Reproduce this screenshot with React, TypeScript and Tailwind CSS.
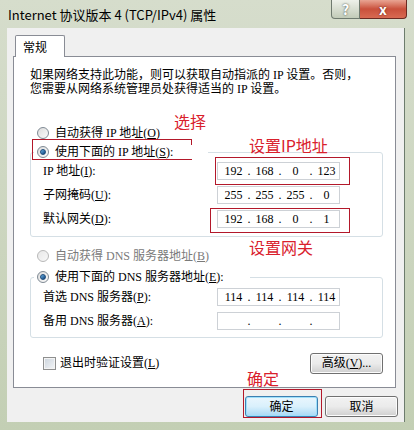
import { Fragment } from "react"

const sans = "font-['Noto_Sans_CJK_SC',sans-serif]"
const body = "font-['Liberation_Serif','Noto_Sans_CJK_SC',serif]"

function Radio({ checked, disabled }: { checked?: boolean; disabled?: boolean }) {
  return (
    <span
      className={
        disabled
          ? "flex items-center justify-center w-[12px] h-[12px] rounded-full border border-[#b8b8b8] bg-gradient-to-br from-[#e8e8e8] to-[#f8f8f8] shrink-0"
          : "flex items-center justify-center w-[12px] h-[12px] rounded-full border border-[#7f8a94] bg-gradient-to-br from-[#dcdcdc] to-[#fbfbfb] shrink-0"
      }
    >
      {checked && (
        <span className="w-[6px] h-[6px] rounded-full bg-gradient-to-br from-[#6fb6e8] to-[#0b3f78] border border-[#1d4b7a]" />
      )}
    </span>
  )
}

function IpBox({ parts }: { parts: string[] }) {
  return (
    <div className="w-[123px] h-[18px] border border-[#cdd1d6] bg-white flex items-center pl-[3px] text-[12px] leading-none text-black">
      {parts.map((p, i) => (
        <Fragment key={i}>
          {i > 0 && <span className="w-[6px] text-center">.</span>}
          <span className="w-[25px] text-center">{p}</span>
        </Fragment>
      ))}
    </div>
  )
}

function Field({ label, parts }: { label: React.ReactNode; parts: string[] }) {
  return (
    <div className="flex items-center h-[18px] pl-[12px]">
      <span className="w-[174px] text-[12px] leading-[14px]">{label}</span>
      <IpBox parts={parts} />
    </div>
  )
}

function Button({ children, primary }: { children: React.ReactNode; primary?: boolean }) {
  return (
    <div
      className={
        primary
          ? "w-[73px] h-[21px] rounded-[3px] border border-[#3c7fb1] bg-gradient-to-b from-[#eaf6fd] via-[#d9f0fc] to-[#a7d9f5] flex items-center justify-center text-[12px] shadow-[inset_0_0_0_1px_#9ee0fb]"
          : "w-[73px] h-[21px] rounded-[3px] border border-[#707070] bg-gradient-to-b from-[#f2f2f2] via-[#ebebeb] to-[#cfcfcf] flex items-center justify-center text-[12px] shadow-[inset_0_0_0_1px_#fcfcfc]"
      }
    >
      {children}
    </div>
  )
}

const red = "absolute border border-[#b3182a]"
const note = "absolute text-[16px] leading-[16px] text-[#d9202c] " + sans

export default function App() {
  return (
    <div className={"relative w-[414px] h-[430px] overflow-hidden bg-gradient-to-b from-[#d6ddcc] to-[#c3cfb4] " + sans}>
      {/* title bar */}
      <div className="flex h-[28px]">
        <div className="pl-[8px] pt-[6px] text-[13px] leading-[17px] text-black">
          Internet 协议版本 4 (TCP/IPv4) 属性
        </div>
        <div className="ml-auto mr-[7px] flex self-start">
          <div className="w-[29px] h-[19px] rounded-bl-[4px] border border-t-0 border-[#6f7a6f] bg-gradient-to-b from-[#eef1ea] to-[#c2cbb8] flex items-center justify-center text-[14px] font-bold text-white [text-shadow:0_0_2px_#2f3a2f]">
            ?
          </div>
          <div className="w-[47px] h-[19px] rounded-br-[4px] border border-t-0 border-l-0 border-[#6b2a22] bg-gradient-to-b from-[#e8a493] via-[#c9503c] to-[#d86a52] flex items-center justify-center text-[14px] font-bold text-white [text-shadow:0_0_2px_#5a1a10]">
            x
          </div>
        </div>
      </div>

      {/* client area */}
      <div className={"ml-[7px] w-[398px] h-[394px] bg-[#f0f0f0] pt-[7px] border-r border-[#6d7c6d] " + body}>
        <div className="relative z-10 ml-[8px] w-[50px] h-[22px] border border-b-0 border-[#898c95] bg-white rounded-t-[2px] flex items-center pl-[7px] text-[12px] font-['Noto_Sans_CJK_SC',sans-serif]">
          常规
        </div>
        <div className="-mt-[1px] ml-[6px] mr-[8px] h-[332px] border border-[#898c95] bg-white text-black">
          <p className="mt-[11px] ml-[16px] text-[12px] leading-[14px]">
            如果网络支持此功能，则可以获取自动指派的 IP 设置。否则，
            <br />
            您需要从网络系统管理员处获得适当的 IP 设置。
          </p>

          <div className="mt-[30px] ml-[23px] h-[14px] flex items-center gap-[6px] text-[12px]">
            <Radio />
            <span>
              自动获得 IP 地址(<span className="underline">O</span>)
            </span>
          </div>

          <div className="relative z-10 mt-[5px] ml-[20px] w-[174px] h-[14px] bg-white pl-[3px] flex items-center gap-[6px] text-[12px]">
            <Radio checked />
            <span>
              使用下面的 IP 地址(<span className="underline">S</span>):
            </span>
          </div>
          <div className="-mt-[7px] ml-[16px] mr-[12px] h-[85px] border border-[#d5dfe5] rounded-[3px] pt-[9px] flex flex-col gap-[6px]">
            <Field label={<>IP 地址(<span className="underline">I</span>):</>} parts={["192", "168", "0", "123"]} />
            <Field label={<>子网掩码(<span className="underline">U</span>):</>} parts={["255", "255", "255", "0"]} />
            <Field label={<>默认网关(<span className="underline">D</span>):</>} parts={["192", "168", "0", "1"]} />
          </div>

          <div className="mt-[12px] ml-[23px] h-[14px] flex items-center gap-[6px] text-[12px] text-[#7a7a7a]">
            <Radio disabled />
            <span>
              自动获得 DNS 服务器地址(<span className="underline">B</span>)
            </span>
          </div>

          <div className="relative z-10 mt-[7px] ml-[20px] w-[216px] h-[14px] bg-white pl-[3px] flex items-center gap-[6px] text-[12px]">
            <Radio checked />
            <span>
              使用下面的 DNS 服务器地址(<span className="underline">E</span>):
            </span>
          </div>
          <div className="-mt-[7px] ml-[16px] mr-[12px] h-[61px] border border-[#d5dfe5] rounded-[3px] pt-[10px] flex flex-col gap-[6px]">
            <Field label={<>首选 DNS 服务器(<span className="underline">P</span>):</>} parts={["114", "114", "114", "114"]} />
            <Field label={<>备用 DNS 服务器(<span className="underline">A</span>):</>} parts={["", "", "", ""]} />
          </div>

          <div className="mt-[14px] ml-[29px] mr-[12px] h-[22px] flex items-center justify-between text-[12px]">
            <div className="flex items-center gap-[2px]">
              <span className="w-[13px] h-[13px] border border-[#8e8f8f] bg-gradient-to-br from-[#cbd3dc] to-[#f4f6f8] shadow-[inset_0_0_0_1px_#f4f4f4]" />
              <span className="ml-[2px]">
                退出时验证设置(<span className="underline">L</span>)
              </span>
            </div>
            <Button>
              高级(<span className="underline">V</span>)...
            </Button>
          </div>
        </div>

        <div className="mt-[8px] pr-[6px] flex justify-end gap-[7px]">
          <Button primary>确定</Button>
          <Button>取消</Button>
        </div>
      </div>

      {/* annotations */}
      <div className={note + " left-[174px] top-[113px]"}>选择</div>
      <div className={red + " left-[32px] top-[139px] w-[160px] h-[21px]"} />
      <div className={note + " left-[249px] top-[137px]"}>设置IP地址</div>
      <div className={red + " left-[215px] top-[157px] w-[135px] h-[28px]"} />
      <div className={red + " left-[210px] top-[208px] w-[140px] h-[25px]"} />
      <div className={note + " left-[249px] top-[239px]"}>设置网关</div>
      <div className={note + " left-[247px] top-[370px]"}>确定</div>
      <div className={red + " left-[243px] top-[389px] w-[79px] h-[29px]"} />
    </div>
  )
}
